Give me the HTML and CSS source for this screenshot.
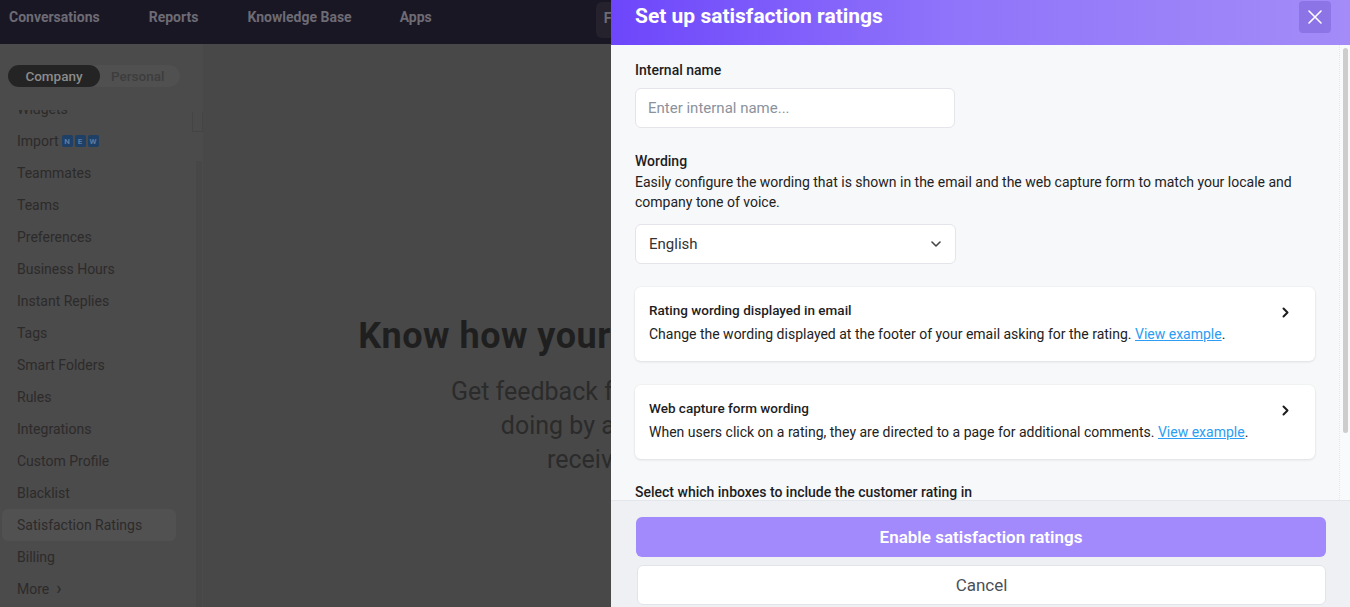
FILE: index.html
```html
<!DOCTYPE html>
<html lang="en">
<head>
<meta charset="utf-8">
<title>Satisfaction Ratings</title>
<link rel="stylesheet" href="styles.css">
</head>
<body>
<div class="page">
  <header class="topnav">
    <a class="nav-item">Conversations</a>
    <a class="nav-item">Reports</a>
    <a class="nav-item">Knowledge Base</a>
    <a class="nav-item">Apps</a>
    <div class="nav-search">Find</div>
  </header>
  <div class="page-body">
    <aside class="sidebar">
      <div class="toggle">
        <span class="toggle-opt active">Company</span>
        <span class="toggle-opt">Personal</span>
      </div>
      <div class="side-scroll">
        <ul class="side-list">
          <li>Widgets</li>
          <li>Import <span class="badge"><b>N</b><b>E</b><b>W</b></span></li>
          <li>Teammates</li>
          <li>Teams</li>
          <li>Preferences</li>
          <li>Business Hours</li>
          <li>Instant Replies</li>
          <li>Tags</li>
          <li>Smart Folders</li>
          <li>Rules</li>
          <li>Integrations</li>
          <li>Custom Profile</li>
          <li>Blacklist</li>
          <li class="current">Satisfaction Ratings</li>
          <li>Billing</li>
          <li>More <span class="more-chev">&#8250;</span></li>
        </ul>
        <div class="side-thumb"></div>
        <div class="side-bar"></div>
      </div>
    </aside>
    <main class="main">
      <h1 class="hero-title">Know how your customers feel about your support</h1>
      <p class="hero-text">Get feedback from your customers about how your team is<br>doing by asking them to rate the support that they<br>receive after each conversation is closed.</p>
    </main>
  </div>
</div>

<section class="drawer">
  <div class="drawer-head">
    <h2 class="drawer-title">Set up satisfaction ratings</h2>
    <button class="close-btn" aria-label="Close">
      <svg width="16" height="16" viewBox="0 0 16 16"><path d="M2 2 L14 14 M14 2 L2 14" stroke="#fff" stroke-width="1.6" stroke-linecap="round"/></svg>
    </button>
  </div>
  <div class="drawer-main">
    <div class="drawer-body">
      <label class="field-label">Internal name</label>
      <div class="input"><span class="placeholder">Enter internal name...</span></div>

      <div class="field-label wording">Wording</div>
      <p class="field-desc">Easily configure the wording that is shown in the email and the web capture form to match your locale and company tone of voice.</p>
      <div class="select">
        <span>English</span>
        <svg width="10" height="6" viewBox="0 0 10 6"><path d="M1 1 L5 5 L9 1" fill="none" stroke="#444" stroke-width="1.6" stroke-linecap="round" stroke-linejoin="round"/></svg>
      </div>

      <div class="card">
        <div class="card-text">
          <div class="card-title">Rating wording displayed in email</div>
          <div class="card-desc">Change the wording displayed at the footer of your email asking for the rating. <a class="link">View example</a>.</div>
        </div>
        <svg class="card-chev" width="7" height="11" viewBox="0 0 7 11"><path d="M1.5 1.5 L5.5 5.5 L1.5 9.5" fill="none" stroke="#1d1d1f" stroke-width="2" stroke-linecap="round" stroke-linejoin="round"/></svg>
      </div>

      <div class="card">
        <div class="card-text">
          <div class="card-title">Web capture form wording</div>
          <div class="card-desc">When users click on a rating, they are directed to a page for additional comments. <a class="link">View example</a>.</div>
        </div>
        <svg class="card-chev" width="7" height="11" viewBox="0 0 7 11"><path d="M1.5 1.5 L5.5 5.5 L1.5 9.5" fill="none" stroke="#1d1d1f" stroke-width="2" stroke-linecap="round" stroke-linejoin="round"/></svg>
      </div>

      <div class="field-label inboxes">Select which inboxes to include the customer rating in</div>
    </div>
    <div class="vscroll"><div class="vscroll-thumb"></div></div>
  </div>
  <div class="drawer-foot">
    <button class="btn-primary">Enable satisfaction ratings</button>
    <button class="btn-secondary">Cancel</button>
  </div>
</section>
</body>
</html>
```

FILE: styles.css
```css
* { box-sizing: border-box; }
html, body { margin: 0; padding: 0; }
body {
  width: 1350px;
  height: 607px;
  overflow: hidden;
  font-family: Roboto, "Liberation Sans", sans-serif;
  background: #484848;
}

/* underlying page (already dimmed) */
.page { height: 607px; display: flex; flex-direction: column; }
.topnav {
  height: 44px;
  flex: none;
  background: #1a1724;
  display: flex;
  align-items: center;
  padding-left: 9px;
}
.nav-item {
  color: #6d6b74;
  font-size: 14px;
  font-weight: 700;
  padding-bottom: 11px;
}
.nav-item:nth-child(1) { margin-right: 49px; }
.nav-item:nth-child(2) { margin-right: 49px; }
.nav-item:nth-child(3) { margin-right: 48px; }
.nav-search {
  margin-left: 164px;
  align-self: flex-start;
  margin-top: 2px;
  height: 36px;
  width: 120px;
  border-radius: 6px;
  background: #25222e;
  color: #6d6b74;
  font-size: 14px;
  font-weight: 700;
  padding: 8px 0 0 8px;
}

.page-body { flex: 1; display: flex; min-height: 0; }
.sidebar {
  width: 203px;
  flex: none;
  background: #4b4b4b;
  display: flex;
  flex-direction: column;
}
.toggle {
  margin: 21px 0 0 8px;
  width: 172px;
  height: 22px;
  border-radius: 11px;
  background: #505050;
  display: flex;
  align-items: center;
  font-size: 13.5px;
  font-weight: 500;
}
.toggle-opt { color: #3d3d3d; padding-left: 11px; }
.toggle-opt.active {
  background: #242424;
  color: #8c8c8c;
  height: 22px;
  width: 92px;
  border-radius: 11px;
  display: flex;
  align-items: center;
  justify-content: center;
  padding: 0;
}
.side-scroll {
  margin-top: 23px;
  flex: 1;
  overflow: hidden;
  position: relative;
}
.side-list {
  list-style: none;
  margin: -17px 0 0 0;
  padding: 0;
}
.side-list li {
  height: 32px;
  display: flex;
  align-items: center;
  padding-left: 15px;
  margin-left: 2px;
  margin-right: 27px;
  color: #2d2a2a;
  font-size: 14px;
  border-radius: 6px;
}
.side-list li.current { background: #515151; }
.badge { display: inline-flex; gap: 2px; margin-left: 3px; }
.badge b {
  width: 11px;
  height: 12px;
  background: #1e3f66;
  color: #5a7aa0;
  font-size: 8px;
  font-weight: 700;
  border-radius: 2px;
  display: flex;
  align-items: center;
  justify-content: center;
}
.more-chev { font-size: 18px; margin-left: 7px; line-height: 1; padding-bottom: 2px; }
.side-thumb {
  position: absolute;
  right: 0;
  top: 2px;
  width: 11px;
  height: 20px;
  border: 1px solid #444;
  border-top: 0;
}
.side-bar {
  position: absolute;
  right: 1px;
  top: 51px;
  bottom: 0;
  width: 6px;
  background: #474747;
}

.main {
  flex: 1;
  text-align: center;
  padding-top: 270px;
}
.hero-title {
  margin: 0;
  font-size: 36px;
  line-height: 44px;
  font-weight: 700;
  color: #1f1f1f;
  white-space: nowrap;
  letter-spacing: 0.5px;
}
.hero-text {
  margin: 17px 0 0 0;
  font-size: 25px;
  line-height: 34px;
  color: #2b2b2b;
  font-weight: 400;
  white-space: nowrap;
}

/* drawer */
.drawer {
  position: absolute;
  top: 0;
  right: 0;
  width: 739px;
  height: 607px;
  background: #f7f8fa;
  display: flex;
  flex-direction: column;
}
.drawer-head {
  height: 45px;
  flex: none;
  background: linear-gradient(90deg, #6d46fb 0%, #8f73fa 45%, #a38cf8 100%);
  display: flex;
  align-items: flex-start;
  justify-content: space-between;
  padding: 1px 19px 0 24px;
}
.drawer-title {
  margin: 0;
  color: #fff;
  font-size: 21px;
  font-weight: 700;
  line-height: 31px;
}
.close-btn {
  width: 32px;
  height: 32px;
  border: 0;
  border-radius: 4px;
  background: rgba(70, 40, 170, 0.22);
  display: flex;
  align-items: center;
  justify-content: center;
  padding: 0;
}
.drawer-main {
  flex: 1;
  min-height: 0;
  display: flex;
}
.drawer-body {
  flex: 1;
  min-width: 0;
  overflow: hidden;
  padding: 16px 24px 20px 24px;
}
.vscroll {
  flex: none;
  width: 11px;
  background: #f9fafb;
  border-left: 1px dotted #e4e6ea;
  padding: 3px 2px 0 3px;
}
.vscroll-thumb {
  height: 385px;
  background: #cdcdcd;
  border-radius: 3px;
}
.field-label {
  display: block;
  font-size: 14px;
  font-weight: 500;
  line-height: 18px;
  color: #1d1d1f;
}
.input {
  margin-top: 9px;
  width: 320px;
  height: 40px;
  background: #fff;
  border: 1px solid #e3e5ea;
  border-radius: 6px;
  display: flex;
  align-items: center;
  padding-left: 12px;
}
.placeholder { color: #8b929c; font-size: 15px; }
.field-label.wording { margin-top: 24px; }
.field-desc {
  margin: 2px 0 0 0;
  font-size: 14px;
  line-height: 20px;
  color: #222;
}
.select {
  margin-top: 12px;
  width: 321px;
  height: 40px;
  background: #fff;
  border: 1px solid #e3e5ea;
  border-radius: 6px;
  display: flex;
  align-items: center;
  justify-content: space-between;
  padding: 0 14px 0 13px;
  font-size: 15px;
  color: #333;
}
.card {
  margin-top: 23px;
  background: #fff;
  border-radius: 6px;
  box-shadow: 0 1px 3px rgba(0, 0, 0, 0.09), 0 0 0 1px rgba(0, 0, 0, 0.015);
  padding: 14px 26px 17px 14px;
  display: flex;
  justify-content: space-between;
  align-items: flex-start;
}
.card + .card { margin-top: 24px; }
.card-title { font-size: 13.5px; font-weight: 500; line-height: 18px; color: #1d1d1f; }
.card-desc { margin-top: 5px; font-size: 14px; line-height: 20px; color: #222; }
.link { color: #2b9df2; text-decoration: underline; }
.card-chev { margin-top: 6px; }
.field-label.inboxes { margin-top: 24px; }

.drawer-foot {
  flex: none;
  height: 107px;
  background: #eef0f4;
  border-top: 1px solid #e3e6eb;
  padding: 16px 24px 0 25px;
  display: flex;
  flex-direction: column;
  gap: 8px;
}
.btn-primary, .btn-secondary {
  height: 40px;
  border-radius: 6px;
  font-family: Roboto, "Liberation Sans", sans-serif;
  font-size: 17px;
  width: 100%;
}
.btn-primary {
  border: 0;
  background: #a28afd;
  color: #fff;
  font-weight: 600;
}
.btn-secondary {
  background: #fff;
  border: 1px solid #e1e4e9;
  color: #4b5058;
  margin-left: 1px;
  width: calc(100% - 1px);
}
```
